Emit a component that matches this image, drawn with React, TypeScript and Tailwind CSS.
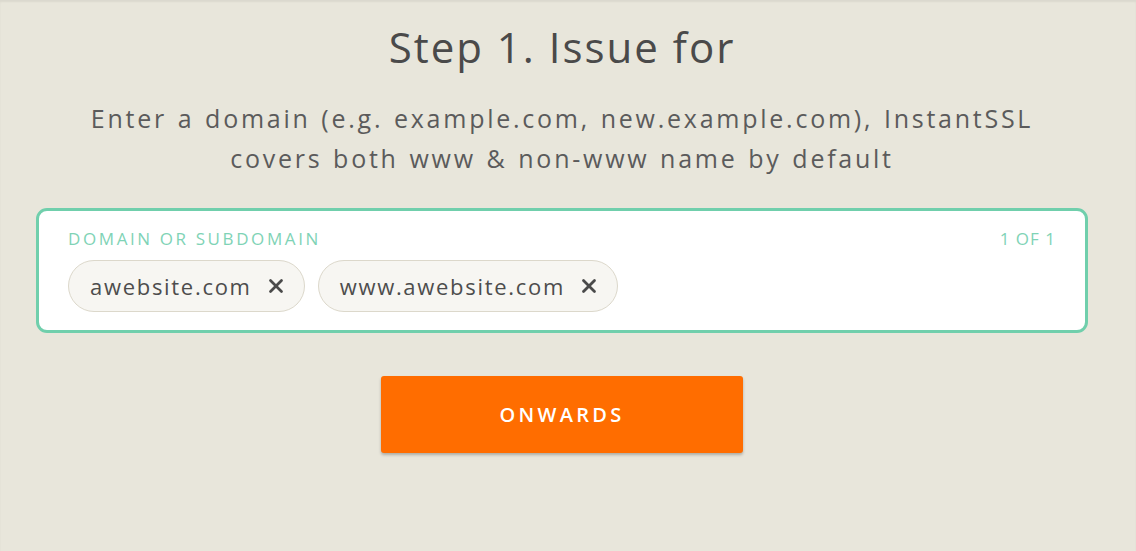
import { X } from "lucide-react";

type Domain = {
  name: string;
};

const domains: Domain[] = [{ name: "awebsite.com" }, { name: "www.awebsite.com" }];

const Chip = ({ name }: Domain) => {
  return (
    <div className="flex items-center gap-[13px] h-[52px] pl-[21px] pr-[17px] rounded-full bg-[#f7f6f2] border border-[#dcd8cb]">
      <span className="text-[22px] tracking-[1.7px] text-[#4d4d4d]">{name}</span>
      <X className="size-[22px] text-[#4a4a4a]" strokeWidth={3} />
    </div>
  );
};

const App = () => {
  return (
    <div
      className="min-h-[551px] w-full bg-[#e8e6db] shadow-[inset_0_2px_2px_rgba(0,0,0,0.06)]"
      style={{ fontFamily: '"Open Sans", "Liberation Sans", sans-serif' }}
    >
      <div className="ml-[36px] w-[1052px] flex flex-col items-center pt-[21px]">
        <h1 className="text-[42px] leading-[52px] font-normal text-[#4a4a4a] tracking-[2px]">Step 1. Issue for</h1>
        <p className="mt-[25px] text-center text-[25px] leading-[40px] text-[#5b5b5b] tracking-[2.75px] [word-spacing:1.5px]">
          Enter a domain (e.g. example.com, new.example.com), InstantSSL
          <br />
          covers both www &amp; non-www name by default
        </p>

        {/* Domain input */}
        <div className="mt-[30px] w-full h-[125px] rounded-[11px] border-[3px] border-[#70cfac] bg-white px-[29px] pt-[18px]">
          <div className="flex justify-between items-center text-[17px] leading-[20px] text-[#7fd3b6]">
            <span className="tracking-[2.6px]">DOMAIN OR SUBDOMAIN</span>
            <span className="tracking-[1px]">1 OF 1</span>
          </div>
          <div className="flex gap-[13px] mt-[11px]">
            {domains.map((d, i) => (
              <Chip key={i} name={d.name} />
            ))}
          </div>
        </div>

        <button className="mt-[43px] w-[362px] h-[77px] rounded-[3px] bg-[#ff6d00] text-white text-[20px] font-semibold tracking-[3.3px] shadow-[0_2px_3px_rgba(0,0,0,0.25)]">
          ONWARDS
        </button>
      </div>
    </div>
  );
};

export default App;
